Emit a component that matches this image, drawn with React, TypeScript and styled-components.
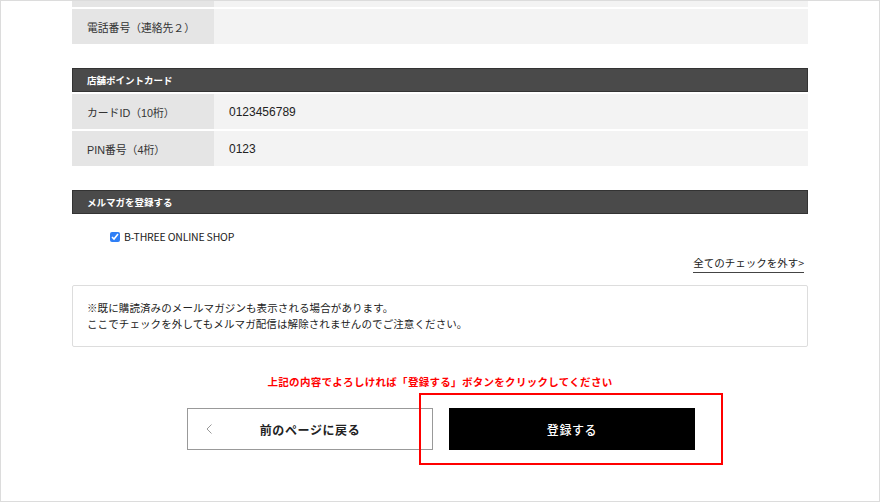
import * as React from "react";
import styled, { createGlobalStyle } from "styled-components";

const GlobalStyle = createGlobalStyle`
  html, body {
    margin: 0;
    padding: 0;
    background: #fff;
  }
  body {
    font-family: "Liberation Sans", "Noto Sans CJK JP", sans-serif;
    color: #333;
  }
`;

const Frame = styled.div`
  width: 880px;
  height: 502px;
  box-sizing: border-box;
  border: 1px solid #dcdcdc;
  overflow: hidden;
`;

const Content = styled.div`
  width: 736px;
  margin: -29px auto 0;
`;

const Section = styled.section`
  margin-bottom: 24px;
`;

const SectionHead = styled.h3`
  margin: 0 0 2px;
  height: 24px;
  box-sizing: border-box;
  display: flex;
  align-items: center;
  padding-left: 14px;
  background: #4a4a4a;
  border: 1px solid #333;
  color: #fff;
  font-family: "Noto Sans CJK JP", sans-serif;
  font-size: 9.5px;
  font-weight: 700;
`;

const Rows = styled.div`
  display: grid;
  row-gap: 2px;
`;

const Row = styled.div`
  display: grid;
  grid-template-columns: 142px 1fr;
  height: 35px;
`;

const Label = styled.div`
  display: flex;
  align-items: center;
  padding-left: 15px;
  background: #e5e5e5;
  font-size: 10.8px;
  color: #333;
`;

const Value = styled.div`
  display: flex;
  align-items: center;
  padding-left: 15px;
  background: #f3f3f3;
  font-size: 12px;
  color: #222;
`;

const CheckRow = styled.label`
  display: flex;
  align-items: center;
  gap: 4px;
  margin: 15px 0 0 38px;
  font-family: "Noto Sans CJK JP", sans-serif;
  font-size: 10.5px;
  color: #222;
  letter-spacing: -0.2px;
`;

const Check = styled.input`
  width: 10px;
  height: 10px;
  margin: 0;
  accent-color: #2f7ff6;
`;

const ClearRow = styled.div`
  display: flex;
  justify-content: flex-end;
  margin: 12px 4px 0 0;
`;

const ClearLink = styled.a`
  font-family: "Noto Sans CJK JP", sans-serif;
  font-size: 10.5px;
  color: #222;
  text-decoration: none;
  padding-bottom: 2px;
  border-bottom: 1px solid #444;
  line-height: 14px;
`;

const Note = styled.div`
  margin-top: 12px;
  height: 62px;
  box-sizing: border-box;
  border: 1px solid #ddd;
  border-radius: 2px;
  padding: 14px 14px 0;
  font-family: "Noto Sans CJK JP", sans-serif;
  font-size: 10.5px;
  line-height: 16px;
  color: #222;
  letter-spacing: 0.1px;
`;

const Confirm = styled.p`
  margin: 28px 0 0;
  text-align: center;
  color: #f00;
  font-family: "Noto Sans CJK JP", sans-serif;
  font-size: 10.5px;
  font-weight: 700;
  letter-spacing: 0.3px;
  line-height: 14px;
`;

const Buttons = styled.div`
  display: flex;
  justify-content: center;
  gap: 16px;
  margin-top: 19px;
  padding-left: 2px;
`;

const Button = styled.button<{ primary?: boolean }>`
  position: relative;
  width: 246px;
  height: 42px;
  box-sizing: border-box;
  display: flex;
  align-items: center;
  justify-content: center;
  font-family: "Noto Sans CJK JP", sans-serif;
  font-size: 12px;
  font-weight: 700;
  letter-spacing: 0.6px;
  cursor: pointer;
  border: 1px solid ${p => (p.primary ? "#000" : "#999")};
  background: ${p => (p.primary ? "#000" : "#fff")};
  color: ${p => (p.primary ? "#fff" : "#222")};
  ${p => p.primary && "font-weight: 500;"}
`;

const Chevron = styled.svg`
  position: absolute;
  left: 18px;
  top: 50%;
  margin-top: -5px;
`;

const Highlight = styled.span`
  position: absolute;
  top: -16px;
  left: -31px;
  right: -29px;
  bottom: -16px;
  border: 2px solid #f00;
  pointer-events: none;
`;

const App: React.FC = () => (
  <Frame>
    <GlobalStyle />
    <Content>
      <Section>
        <Rows>
          <Row>
            <Label />
            <Value />
          </Row>
          <Row>
            <Label>電話番号（連絡先２）</Label>
            <Value />
          </Row>
        </Rows>
      </Section>

      <Section>
        <SectionHead>店舗ポイントカード</SectionHead>
        <Rows>
          <Row>
            <Label>カードID（10桁）</Label>
            <Value>0123456789</Value>
          </Row>
          <Row>
            <Label>PIN番号（4桁）</Label>
            <Value>0123</Value>
          </Row>
        </Rows>
      </Section>

      <div>
        <SectionHead>メルマガを登録する</SectionHead>
        <CheckRow>
          <Check type="checkbox" defaultChecked />
          B-THREE ONLINE SHOP
        </CheckRow>
        <ClearRow>
          <ClearLink href="#">全てのチェックを外す&gt;</ClearLink>
        </ClearRow>
        <Note>
          ※既に購読済みのメールマガジンも表示される場合があります。
          <br />
          ここでチェックを外してもメルマガ配信は解除されませんのでご注意ください。
        </Note>
      </div>

      <Confirm>上記の内容でよろしければ「登録する」ボタンをクリックしてください</Confirm>

      <Buttons>
        <Button>
          <Chevron width="6" height="10" viewBox="0 0 6 10">
            <path d="M5.5 0.5 L1 5 L5.5 9.5" fill="none" stroke="#999" strokeWidth="1" />
          </Chevron>
          前のページに戻る
        </Button>
        <Button primary>
          登録する
          <Highlight />
        </Button>
      </Buttons>
    </Content>
  </Frame>
);

export default App;
